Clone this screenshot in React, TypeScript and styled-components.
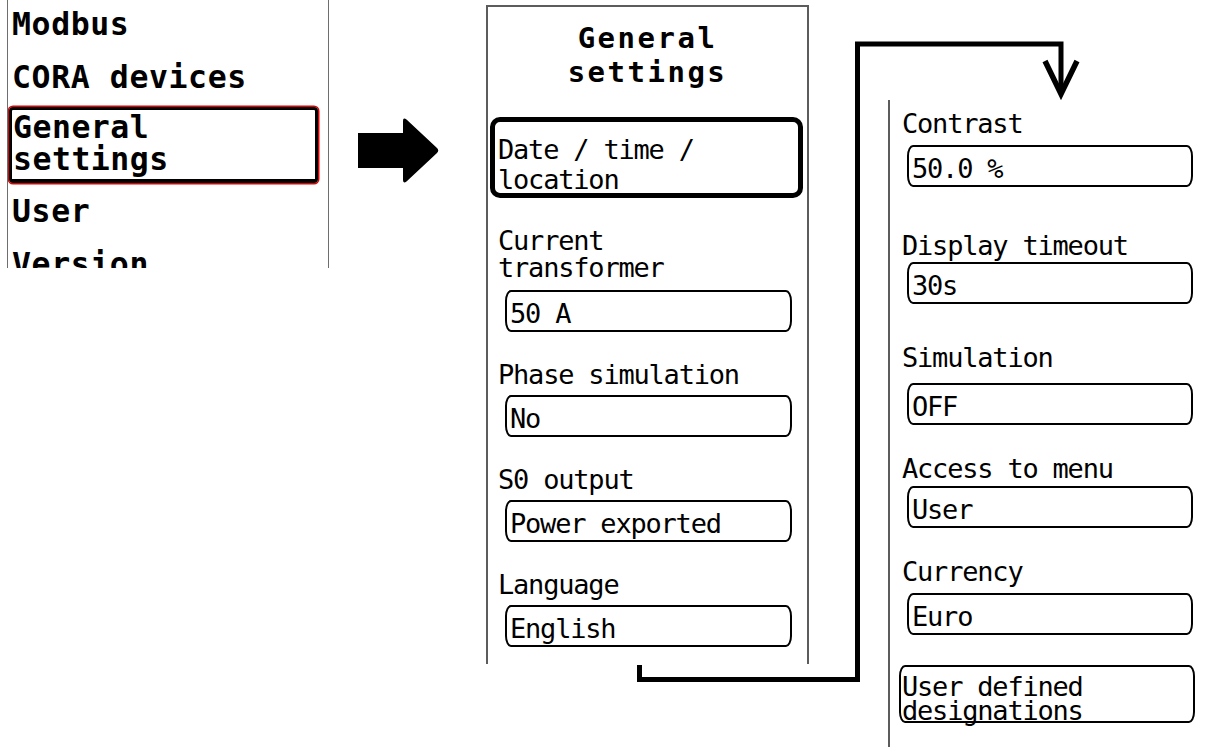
import React from 'react';
import styled, { createGlobalStyle } from 'styled-components';

const mono = `"DejaVu Sans Mono", "Liberation Mono", monospace`;

const GlobalStyle = createGlobalStyle`
  html, body {
    margin: 0;
    padding: 0;
    background: #ffffff;
  }
  body {
    font-family: ${mono};
    color: #000000;
  }
`;

const Canvas = styled.div`
  position: relative;
  width: 1205px;
  height: 747px;
  overflow: hidden;
  display: flex;
  align-items: flex-start;
  background: #ffffff;
`;

/* ---------- left: main menu ---------- */

const MenuScreen = styled.div`
  margin-left: 7px;
  width: 322px;
  height: 268px;
  box-sizing: border-box;
  border-left: 1px solid #6e6e6e;
  border-right: 1px solid #6e6e6e;
  overflow: hidden;
  display: flex;
  flex-direction: column;
  flex-shrink: 0;
`;

const MenuItem = styled.div`
  height: 53px;
  flex-shrink: 0;
  padding-left: 4px;
  font-family: ${mono};
  font-weight: bold;
  font-size: 31.5px;
  letter-spacing: 0.6px;
  line-height: 48px;
  white-space: nowrap;
`;

const SelectedMenuItem = styled.div`
  margin: 1px 0 4px 1px;
  width: 309px;
  height: 76px;
  box-sizing: border-box;
  flex-shrink: 0;
  padding: 1px 0 0 1px;
  border: 3px solid #000000;
  border-bottom-width: 4px;
  border-radius: 4px;
  box-shadow: 0 0 0 1.5px #e10000;
  font-family: ${mono};
  font-weight: bold;
  font-size: 31.5px;
  letter-spacing: 0.5px;
  line-height: 32px;
  white-space: pre;
`;

/* ---------- arrow between menu and settings ---------- */

const ArrowSlot = styled.div`
  width: 157px;
  flex-shrink: 0;
  padding: 117px 0 0 29px;
  box-sizing: border-box;
  svg {
    display: block;
  }
`;

/* ---------- settings screens ---------- */

const SettingsScreen = styled.div`
  margin-top: 5px;
  width: 323px;
  height: 659px;
  box-sizing: border-box;
  flex-shrink: 0;
  border: 2px solid #5c5c5c;
  border-bottom: none;
  padding-top: 14px;
  display: flex;
  flex-direction: column;
`;

const ContinuedScreen = styled.div`
  margin: 100px 0 0 79px;
  flex: 1;
  height: 647px;
  box-sizing: border-box;
  border-left: 2px solid #5c5c5c;
  display: flex;
  flex-direction: column;
`;

const Title = styled.div`
  font-family: ${mono};
  font-weight: bold;
  font-size: 29px;
  letter-spacing: 2.5px;
  line-height: 34px;
  text-align: center;
  white-space: pre;
`;

const ActiveEntry = styled.div`
  margin: 28px 0 0 2px;
  width: 313px;
  height: 81px;
  box-sizing: border-box;
  border: 5px solid #000000;
  border-radius: 10px;
  padding: 13px 0 0 3px;
  font-family: ${mono};
  font-size: 27px;
  letter-spacing: -1.2px;
  line-height: 30px;
  white-space: pre;
`;

const Field = styled.div<{ $top: number }>`
  margin-top: ${(p) => p.$top}px;
  display: flex;
  flex-direction: column;
`;

const FieldLabel = styled.div<{ $indent: number; $gap: number }>`
  padding-left: ${(p) => p.$indent}px;
  margin-bottom: ${(p) => p.$gap}px;
  font-family: ${mono};
  font-size: 27px;
  letter-spacing: -1.2px;
  line-height: 27px;
  white-space: pre;
`;

const ValueBox = styled.div<{ $indent: number; $width: number }>`
  margin-left: ${(p) => p.$indent}px;
  width: ${(p) => p.$width}px;
  height: 42px;
  box-sizing: border-box;
  border: 2px solid #000000;
  border-radius: 6px / 11px;
  padding: 5px 0 0 3px;
  font-family: ${mono};
  font-size: 27px;
  letter-spacing: -1.2px;
  line-height: 34px;
  white-space: pre;
`;

const LinkBox = styled.div<{ $top: number }>`
  margin: ${(p) => p.$top}px 0 0 9px;
  width: 296px;
  height: 58px;
  box-sizing: border-box;
  border: 2px solid #000000;
  border-radius: 6px / 11px;
  padding: 8px 0 0 1px;
  font-family: ${mono};
  font-size: 27px;
  letter-spacing: -1.2px;
  line-height: 24px;
  white-space: pre;
`;

const Overlay = styled.svg`
  position: absolute;
  left: 0;
  top: 0;
  pointer-events: none;
`;

type Setting = { label: string; value: string; top: number; gap: number };

const firstPage: Setting[] = [
  { label: 'Current\ntransformer', value: '50 A', top: 29, gap: 9 },
  { label: 'Phase simulation', value: 'No', top: 29, gap: 7 },
  { label: 'S0 output', value: 'Power exported', top: 29, gap: 7 },
  { label: 'Language', value: 'English', top: 29, gap: 7 },
];

const secondPage: Setting[] = [
  { label: 'Contrast', value: '50.0 %', top: 10, gap: 8 },
  { label: 'Display timeout', value: '30s', top: 45, gap: 3 },
  { label: 'Simulation', value: 'OFF', top: 40, gap: 12 },
  { label: 'Access to menu', value: 'User', top: 30, gap: 4 },
  { label: 'Currency', value: 'Euro', top: 30, gap: 8 },
];

const App: React.FC = () => {
  return (
    <>
      <GlobalStyle />
      <Canvas>
        <MenuScreen>
          <MenuItem>Modbus</MenuItem>
          <MenuItem>CORA devices</MenuItem>
          <SelectedMenuItem>{'General\nsettings'}</SelectedMenuItem>
          <MenuItem>User</MenuItem>
          <MenuItem>Version</MenuItem>
        </MenuScreen>

        <ArrowSlot>
          <svg width="82" height="68" viewBox="0 0 82 68">
            <path
              d="M0 16 H45 V4 Q45 0 48.5 2.5 L79 31 Q81.5 33.5 79 36 L48.5 64.5 Q45 67 45 63 V51 H0 Z"
              fill="#000000"
            />
          </svg>
        </ArrowSlot>

        <SettingsScreen>
          <Title>{'General\nsettings'}</Title>
          <ActiveEntry>{'Date / time /\nlocation'}</ActiveEntry>
          {firstPage.map((s) => (
            <Field key={s.label} $top={s.top}>
              <FieldLabel $indent={10} $gap={s.gap}>
                {s.label}
              </FieldLabel>
              <ValueBox $indent={17} $width={287}>
                {s.value}
              </ValueBox>
            </Field>
          ))}
        </SettingsScreen>

        <ContinuedScreen>
          {secondPage.map((s) => (
            <Field key={s.label} $top={s.top}>
              <FieldLabel $indent={12} $gap={s.gap}>
                {s.label}
              </FieldLabel>
              <ValueBox $indent={17} $width={286}>
                {s.value}
              </ValueBox>
            </Field>
          ))}
          <LinkBox $top={30}>{'User defined\ndesignations'}</LinkBox>
        </ContinuedScreen>

        <Overlay width="1205" height="747" viewBox="0 0 1205 747">
          <polyline
            points="639.5,665 639.5,679.5 857.5,679.5 857.5,44 1061,44 1061,92"
            fill="none"
            stroke="#000000"
            strokeWidth="5"
            strokeLinejoin="miter"
          />
          <polyline
            points="1045,61 1061,94 1077,61"
            fill="none"
            stroke="#000000"
            strokeWidth="5.5"
            strokeLinejoin="miter"
          />
        </Overlay>
      </Canvas>
    </>
  );
};

export default App;
